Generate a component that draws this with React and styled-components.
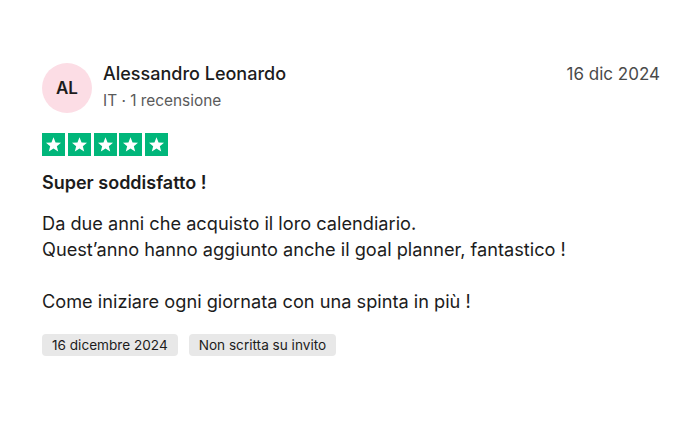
import styled, { createGlobalStyle } from "styled-components";

const GlobalStyle = createGlobalStyle`
    body {
        margin: 0;
        background: #ffffff;
        font-family: Inter, "Noto Sans", sans-serif;
        color: #1c1c1c;
    }
`;

export default function App() {
    return (
        <>
            <GlobalStyle />
            <Card>
                <Header>
                    <Avatar>AL</Avatar>
                    <Who>
                        <Name>Alessandro Leonardo</Name>
                        <Meta>IT · 1 recensione</Meta>
                    </Who>
                    <DateText>16 dic 2024</DateText>
                </Header>
                <Stars>
                    {[0, 1, 2, 3, 4].map((i) => (
                        <StarBox key={i}>
                            <svg width="17" height="17" viewBox="0 0 24 24">
                                <path
                                    fill="#ffffff"
                                    d="M12 1.8l2.9 7.2 7.7.5-5.9 4.9 1.9 7.5L12 17.8l-6.6 4.1 1.9-7.5-5.9-4.9 7.7-.5z"
                                />
                            </svg>
                        </StarBox>
                    ))}
                </Stars>
                <Title>Super soddisfatto !</Title>
                <Body>
                    <p>
                        Da due anni che acquisto il loro calendiario.
                        <br />
                        Quest’anno hanno aggiunto anche il goal planner, fantastico !
                    </p>
                    <p>Come iniziare ogni giornata con una spinta in più !</p>
                </Body>
                <Tags>
                    <Tag>16 dicembre 2024</Tag>
                    <Tag>Non scritta su invito</Tag>
                </Tags>
            </Card>
        </>
    );
}

const Card = styled.div`
    padding: 63px 40px 0 42px;
    display: flex;
    flex-direction: column;
`;

const Header = styled.div`
    display: flex;
    align-items: flex-start;
    gap: 11px;
`;

const Avatar = styled.div`
    width: 50px;
    height: 50px;
    border-radius: 50%;
    background: #fcdde5;
    display: flex;
    align-items: center;
    justify-content: center;
    font-size: 17px;
    font-weight: 600;
    color: #1c1c1c;
    flex-shrink: 0;
`;

const Who = styled.div`
    display: flex;
    flex-direction: column;
    flex: 1;
`;

const Name = styled.div`
    font-size: 18px;
    font-weight: 500;
    line-height: 22px;
`;

const Meta = styled.div`
    margin-top: 6px;
    font-size: 15.4px;
    line-height: 20px;
    color: #5a5a5a;
`;

const DateText = styled.div`
    font-size: 17px;
    line-height: 22px;
    color: #4a4a4a;
`;

const Stars = styled.div`
    display: flex;
    gap: 2.75px;
    margin-top: 20px;
`;

const StarBox = styled.div`
    width: 23px;
    height: 23px;
    background: #00b67a;
    display: flex;
    align-items: center;
    justify-content: center;
`;

const Title = styled.div`
    margin-top: 16px;
    font-size: 18px;
    font-weight: 600;
    line-height: 22px;
`;

const Body = styled.div`
    margin-top: 16px;
    font-size: 18.2px;
    line-height: 26px;

    p {
        margin: 0 0 26px;
    }
    p:last-child {
        margin-bottom: 0;
    }
`;

const Tags = styled.div`
    display: flex;
    gap: 11px;
    margin-top: 20px;
`;

const Tag = styled.div`
    background: #e8e8e8;
    border-radius: 4px;
    padding: 0 10px;
    height: 22px;
    display: flex;
    align-items: center;
    font-size: 13.6px;
    color: #1c1c1c;
`;
